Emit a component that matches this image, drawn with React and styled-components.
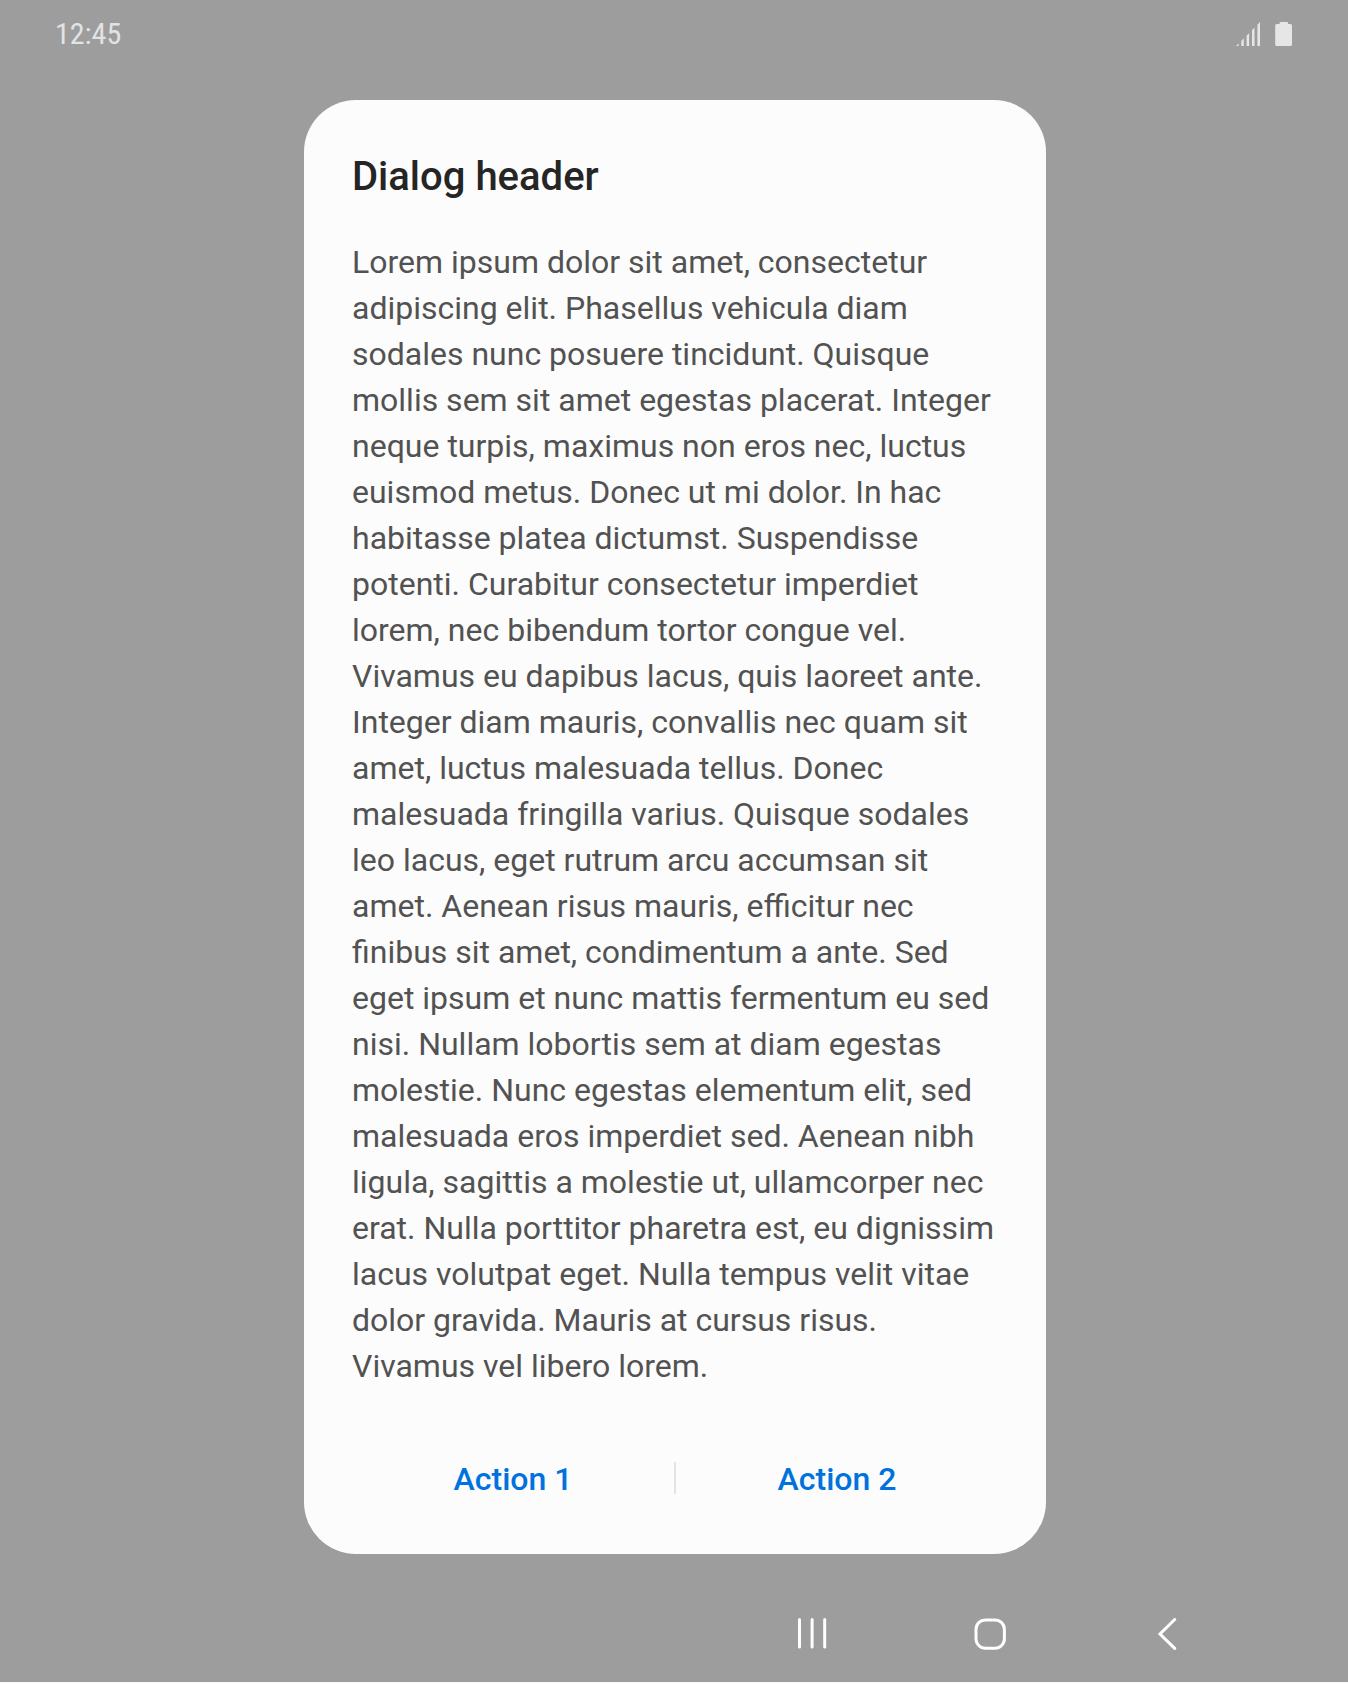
import React from "react";
import styled, { createGlobalStyle } from "styled-components";

const Global = createGlobalStyle`
  * { box-sizing: border-box; }
  body { margin: 0; background: #fcfcfc; font-family: Roboto, sans-serif; }
`;
const Screen = styled.div`
  width: 1348px; height: 1682px; background: #9d9d9d;
  display: flex; flex-direction: column; align-items: center; overflow: hidden;
`;
const StatusBar = styled.header`
  width: 100%; height: 100px; padding: 15px 55px 0; display: flex; justify-content: space-between; align-items: flex-start;
`;
const Clock = styled.span`
  font-family: "Roboto Condensed", Roboto, sans-serif; font-size: 30px; line-height: 38px; color: #e3e3e3; font-stretch: 75%;
`;
const StatusIcons = styled.div`display: flex; height: 38px; align-items: center; gap: 15px;`;
const Dialog = styled.section`
  width: 742px; height: 1454px; margin-left: 2px; border-radius: 52px; background: #fcfcfc; padding: 53px 48px 0; display: flex; flex-direction: column; flex: none;
`;
const Title = styled.h1`margin: 0; font-size: 40px; line-height: 48px; font-weight: 500; color: #252525;`;
const Body = styled.p`margin: 38px 0 0; font-size: 32px; line-height: 46px; color: #525252; white-space: pre;`;
const Actions = styled.div`display: flex; align-items: center; margin-top: 66px;`;
const Action = styled.button`
  flex: 1; border: 0; background: none; padding: 1px 0 0; font: 500 32px/46px Roboto, sans-serif; color: #0072de;
`;
const Divider = styled.i`width: 2px; height: 32px; margin-bottom: 1px; background: #e4e4e4;`;
const NavBar = styled.nav`
  width: 100%; flex: 1; display: flex; align-items: flex-start; justify-content: flex-end; padding: 64px 171px 0 0; gap: 146px;
`;

const lines = [
  "Lorem ipsum dolor sit amet, consectetur", "adipiscing elit. Phasellus vehicula diam", "sodales nunc posuere tincidunt. Quisque",
  "mollis sem sit amet egestas placerat. Integer", "neque turpis, maximus non eros nec, luctus", "euismod metus. Donec ut mi dolor. In hac",
  "habitasse platea dictumst. Suspendisse", "potenti. Curabitur consectetur imperdiet", "lorem, nec bibendum tortor congue vel.",
  "Vivamus eu dapibus lacus, quis laoreet ante.", "Integer diam mauris, convallis nec quam sit", "amet, luctus malesuada tellus. Donec",
  "malesuada fringilla varius. Quisque sodales", "leo lacus, eget rutrum arcu accumsan sit", "amet. Aenean risus mauris, efficitur nec",
  "finibus sit amet, condimentum a ante. Sed", "eget ipsum et nunc mattis fermentum eu sed", "nisi. Nullam lobortis sem at diam egestas",
  "molestie. Nunc egestas elementum elit, sed", "malesuada eros imperdiet sed. Aenean nibh", "ligula, sagittis a molestie ut, ullamcorper nec",
  "erat. Nulla porttitor pharetra est, eu dignissim", "lacus volutpat eget. Nulla tempus velit vitae", "dolor gravida. Mauris at cursus risus.", "Vivamus vel libero lorem.",
];

export default function App() {
  return (
    <>
      <Global />
      <Screen>
        <StatusBar>
          <Clock>12:45</Clock>
          <StatusIcons>
            <svg width="24" height="24" viewBox="0 0 24 24" fill="#e6e6e6">
              <path d="M0 24l2.6-2.6V24zM5.3 24v-5l2.5-2.8V24zM10.6 24V13.7l2.5-2.8V24zM16 24V8.3l2.5-2.8V24zM21.4 24V2.8L24 0v24z" />
            </svg>
            <svg width="18" height="24" viewBox="0 0 18 24" fill="#e6e6e6">
              <path d="M5.5 0h6.6q.9 0 .9 1v1h2.4q1.6 0 1.6 1.6v18.8q0 1.6-1.6 1.6H1.8Q.2 24 .2 22.4V3.6Q.2 2 1.8 2h2.8V1q0-1 .9-1z" />
            </svg>
          </StatusIcons>
        </StatusBar>
        <Dialog>
          <Title>Dialog header</Title>
          <Body>{lines.join("\n")}</Body>
          <Actions>
            <Action>Action 1</Action><Divider /><Action>Action 2</Action>
          </Actions>
        </Dialog>
        <NavBar>
          <svg width="32" height="32" viewBox="0 0 32 32" stroke="#fff" strokeWidth="3" strokeLinecap="round"><path d="M3.5 1.5v27.4M16.1 1.5v27.4M28.7 1.5v27.4" /></svg>
          <svg width="32" height="32" viewBox="0 0 32 32" fill="none" stroke="#fff" strokeWidth="3"><rect x="2" y="1.9" width="28.4" height="28.4" rx="9.5" /></svg>
          <svg width="25" height="32" viewBox="0 0 25 32" fill="none" stroke="#fff" strokeWidth="3" strokeLinecap="round"><path d="M22.7 1.5L8 16l14.7 14.4" /></svg>
        </NavBar>
      </Screen>
    </>
  );
}
